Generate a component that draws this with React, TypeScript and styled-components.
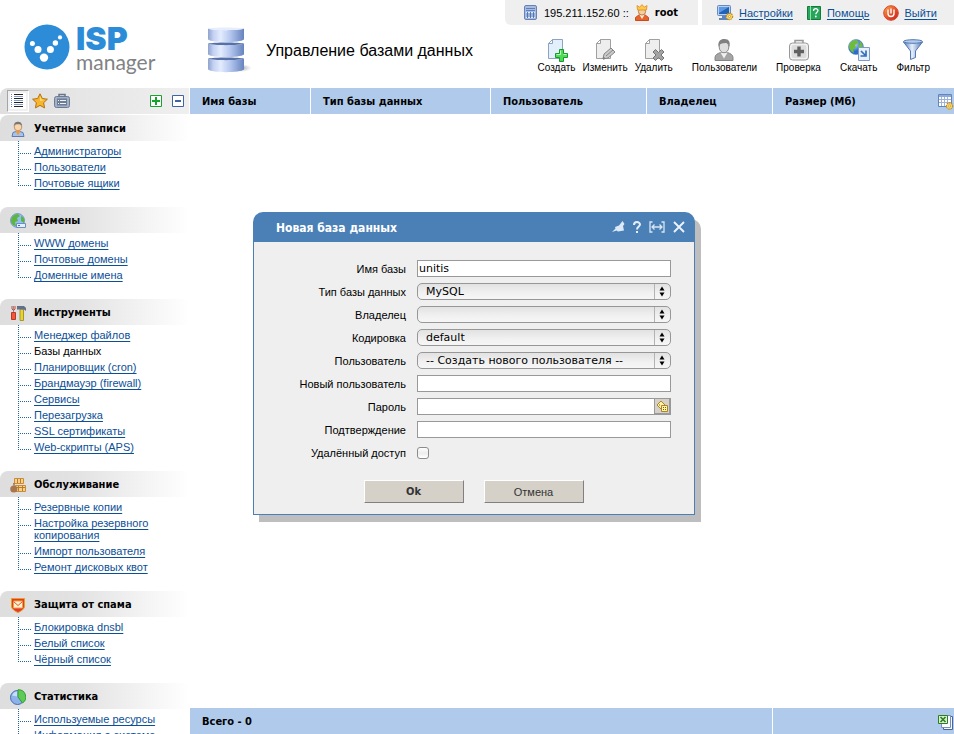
import React from "react";
import styled, { createGlobalStyle, css } from "styled-components";

const regular = `"Liberation Sans", Tahoma, sans-serif`;
const condensed = `"DejaVu Sans Condensed", "DejaVu Sans", Tahoma, sans-serif`;
const wide = `"DejaVu Sans", Verdana, sans-serif`;
const blue = "#afcaeb";
const linkBlue = "#0b4f97";

const GlobalStyle = createGlobalStyle`
  * { box-sizing: border-box; }
  body { margin: 0; background: #fff; color: #000; font: 11px/14px ${regular}; }
  svg { display: block; flex: none; }
`;

const boldText = css`
  font-family: ${condensed};
  font-stretch: condensed;
  font-weight: 700;
`;

const Page = styled.div`
  display: grid;
  grid-template-rows: 88px minmax(0, 1fr);
  height: 100vh;
  overflow: hidden;
  position: relative;
`;

const Link = styled.a`
  color: ${linkBlue};
  text-decoration: underline;
  text-decoration-thickness: 1px;
  text-underline-offset: 2px;
`;

/* ---------- header ---------- */

const Header = styled.header`
  display: flex;
  align-items: flex-start;
`;

const Logo = styled.div`
  display: flex;
  gap: 6px;
  width: 190px;
  padding: 24px 0 0 24px;
`;

const LogoText = styled.div`
  display: flex;
  flex-direction: column;
  padding-top: 2px;
`;

const LogoTop = styled.span`
  color: #2d8cd8;
  font-family: Inter, sans-serif;
  font-size: 32px;
  font-weight: 900;
  line-height: 26px;
`;

const LogoBottom = styled.span`
  color: #808285;
  font-family: Lato, sans-serif;
  font-size: 21px;
  line-height: 20px;
`;

const PageTitle = styled.div`
  display: flex;
  align-items: center;
  gap: 14px;
  padding: 26px 0 0 16px;
`;

const Title = styled.h1`
  margin: 0;
  padding-top: 2px;
  font-size: 16px;
  line-height: 20px;
  font-weight: 400;
  white-space: nowrap;
`;

const HeaderRight = styled.div`
  margin-left: auto;
`;

const TopBar = styled.div`
  display: flex;
  justify-content: flex-end;
  gap: 4px;
`;

const TopPanel = styled.div<{ $rounded?: boolean }>`
  display: flex;
  align-items: center;
  gap: 6px;
  height: 25px;
  padding: 0 20px 0 19px;
  background: #efefef;
  white-space: nowrap;
  ${(p) => p.$rounded && css`border-bottom-left-radius: 6px;`}
`;

const UserName = styled.strong`
  ${boldText}
`;

const TopLinks = styled(TopPanel).attrs({ as: "nav" })`
  gap: 14px;
  padding: 0 17px 0 15px;
`;

const TopItem = styled.span`
  display: flex;
  align-items: center;
  gap: 5px;
`;

const Tools = styled.div`
  display: flex;
  justify-content: flex-end;
  gap: 19px;
  padding: 13px 24px 0 0;
`;

const ToolGroup = styled.div`
  display: flex;
  gap: 7px;
`;

const Tool = styled.button`
  display: flex;
  flex-direction: column;
  align-items: center;
  padding: 0;
  border: 0;
  background: none;
  font: 10px/12px ${regular};
  color: #000;
`;

/* ---------- sidebar ---------- */

const Content = styled.div`
  display: grid;
  grid-template-columns: 190px minmax(0, 1fr);
  min-height: 0;
`;

const Sidebar = styled.aside`
  overflow: hidden;
`;

const SideTools = styled.div`
  display: flex;
  align-items: center;
  gap: 6px;
  height: 26px;
  margin: 0 1px 1px 0;
  padding: 0 5px 0 7px;
  border-top-left-radius: 8px;
  background: linear-gradient(to right, #dfdfdf, #efefef);
`;

const IconButton = styled.button<{ $pressed?: boolean; $push?: boolean }>`
  display: grid;
  place-items: center;
  padding: 0;
  border: 0;
  background: none;
  ${(p) => p.$push && css`margin: 0 4px 0 auto;`}
  ${(p) =>
    p.$pressed &&
    css`
      width: 22px;
      height: 22px;
      margin-right: -3px;
      border: 1px solid #fff;
      border-top-color: #a5a5a5;
      border-left-color: #a5a5a5;
      background: #f0f0f0;
    `}
`;

const SectionTitle = styled.h2`
  display: flex;
  align-items: center;
  gap: 8px;
  height: 26px;
  margin: 0;
  padding: 2px 0 0 10px;
  border-top-left-radius: 8px;
  background: linear-gradient(to right, #dedede, #e2e2e2 40%, #fff);
  font-size: 11px;
  ${boldText}
`;

const dotsDown = `repeating-linear-gradient(to bottom, #1d66a3 0 1px, transparent 1px 2px)`;
const dotsRight = `repeating-linear-gradient(to right, #1d66a3 0 1px, transparent 1px 2px)`;

const Tree = styled.ul`
  margin: 0 0 16px 18px;
  padding: 2px 0 0;
  list-style: none;
  background: ${dotsDown} 0 0 / 1px 2px no-repeat;
`;

const TreeItem = styled.li`
  padding: 2px 24px 2px 16px;
  line-height: 12px;
  background: ${dotsDown} 0 0 / 1px 100% no-repeat, ${dotsRight} 0 10px / 13px 1px no-repeat;
  &:last-child {
    background-size: 1px 11px, 13px 1px;
  }
`;

/* ---------- table ---------- */

const Grid = styled.table`
  width: 100%;
  height: 100%;
  border-collapse: separate;
  border-spacing: 0;
  table-layout: fixed;
`;

const Column = styled.col<{ $width?: number }>`
  ${(p) => p.$width && css`width: ${p.$width}px;`}
`;

const cell = css`
  height: 26px;
  padding: 2px 0 0 12px;
  background: ${blue};
  border-right: 1px solid #fff;
  text-align: left;
  white-space: nowrap;
  ${boldText}
  &:last-child { border-right: 0; }
`;
const HeadCell = styled.th`${cell}`;
const FootCell = styled.td`${cell}`;
const CellRow = styled.div`
  display: flex;
  align-items: center;
  justify-content: space-between;
`;
const CellEnd = styled(CellRow)`
  justify-content: flex-end;
`;

/* ---------- dialog ---------- */

const Overlay = styled.div`
  position: absolute;
  inset: 0;
  display: flex;
  justify-content: center;
  align-items: flex-start;
  padding: 212px 6px 0 0;
`;

const Dialog = styled.section`
  width: 442px;
  border-radius: 10px 10px 0 0;
  background: #4b80b7;
  box-shadow: 6px 7px 0 #bebebe;
`;

const DialogBar = styled.div`
  display: flex;
  align-items: center;
  gap: 8px;
  height: 30px;
  padding: 0 10px 0 23px;
  color: #fff;
`;

const DialogTitle = styled.h2`
  flex: 1;
  margin: 0;
  padding-top: 2px;
  font-size: 12px;
  ${boldText}
`;

const Form = styled.form`
  margin: 0 1px;
  padding: 15px 23px 11px 0;
  border-bottom: 1px solid #4b80b7;
  background: #efefef;
`;

const Row = styled.div`
  display: grid;
  grid-template-columns: 152px minmax(0, 1fr);
  align-items: center;
  column-gap: 11px;
  height: 23px;
`;

const Label = styled.label`
  text-align: right;
`;

const Input = styled.input`
  width: 100%;
  min-width: 0;
  height: 17px;
  padding: 0 1px;
  border: 1px solid #999;
  border-radius: 0;
  background: #fff;
  font: 11px/15px ${wide};
`;

const InputGroup = styled.div`
  display: flex;
  ${Input} { border-right: 0; }
`;

const DiceButton = styled.button`
  display: grid;
  place-items: center;
  flex: none;
  width: 17px;
  height: 17px;
  padding: 0;
  border: 1px solid #999;
  border-right-width: 2px;
  border-bottom-width: 2px;
  background: #d6d0c8;
`;

const SelectBox = styled.div`
  display: grid;
  grid-template-columns: minmax(0, 1fr) 17px;
  align-items: center;
  svg { grid-area: 1 / 2; pointer-events: none; }
`;

const Select = styled.select`
  grid-area: 1 / 1 / 2 / 3;
  width: 100%;
  height: 17px;
  padding: 0 20px 0 8px;
  appearance: none;
  border: 1px solid #979797;
  border-radius: 5px;
  background: linear-gradient(to bottom, #e2e2e2, #f1f1f1 60%, #f6f6f6);
  color: #000;
  font: 11px/15px ${wide};
`;

const Checkbox = styled.input.attrs({ type: "checkbox" })`
  width: 12px;
  height: 12px;
  margin: 0;
  appearance: none;
  border: 1px solid #8c8c8c;
  border-radius: 3px;
  background: linear-gradient(to bottom, #fff, #ececec 50%, #fff);
`;

const Buttons = styled.div`
  display: flex;
  justify-content: center;
  gap: 20px;
  padding: 16px 0 0 22px;
`;

const Button = styled.button<{ $primary?: boolean }>`
  width: 100px;
  height: 23px;
  padding: 0;
  border: 1px solid #fff;
  border-right-color: #808080;
  border-bottom-color: #808080;
  background: #d5d1c9;
  color: #333;
  font: 11px/14px ${regular};
  ${(p) => p.$primary && boldText}
`;

/* ---------- drawings ---------- */

const LogoMark = () => (
  <svg width="46" height="46" viewBox="0 0 46 46">
    <circle cx="23" cy="23" r="22.5" fill="#2d8cd8" />
    <g fill="#fff">
      <circle cx="8.4" cy="19.6" r="2.5" /><circle cx="14" cy="25.6" r="3.5" /><circle cx="20" cy="33.6" r="4.2" />
      <circle cx="26.4" cy="25.6" r="3.5" /><circle cx="31.4" cy="19" r="2.7" /><circle cx="36" cy="13.4" r="2.1" />
    </g>
  </svg>
);

const DatabaseIcon = () => (
  <svg width="46" height="48" viewBox="0 0 46 48">
    <defs>
      <linearGradient id="db" x1="0" x2="1"><stop offset="0" stopColor="#8fa3d0" /><stop offset=".15" stopColor="#c3d1f2" /><stop offset=".35" stopColor="#e3ebfd" /><stop offset=".6" stopColor="#b9caf0" /><stop offset="1" stopColor="#6683bf" /></linearGradient>
      <radialGradient id="dbs"><stop offset="0" stopColor="#6f7480" stopOpacity=".8" /><stop offset="1" stopColor="#aaa" stopOpacity="0" /></radialGradient>
    </defs>
    <ellipse cx="34" cy="42" rx="12" ry="4" fill="url(#dbs)" />
    {[31, 16, 1].map((y) => (
      <g key={y} transform={`translate(2 ${y})`}>
        <path d="M0 1.500v11c4 3.500 32 3.500 36 0v-11c-5 2.200-31 2.200-36 0z" fill="url(#db)" />
        <path d="M0 1.500c5-1.500 31-1.500 36 0-5 2.200-31 2.200-36 0z" fill={y > 1 ? "#5671a8" : "#e6edfc"} />
      </g>
    ))}
  </svg>
);

const ServerIcon = () => (
  <svg width="14" height="16" viewBox="0 0 14 16">
    <rect x=".5" y=".5" width="12" height="14" rx="1.5" fill="#a9bce0" stroke="#6683b8" />
    <path d="M2 3.5h9M2 5.5h9" stroke="#5e7ebc" />
    <path d="M2 7h9v6H2z" fill="#e2ebfa" /><path d="M3.5 7v6M6.5 7v6M9.5 7v6M2 9h9M2 11h9" stroke="#5376b8" />
  </svg>
);

const CrownIcon = () => (
  <svg width="14" height="17" viewBox="0 0 14 17">
    <path d="M.5 16.5v-3l4-3h5l4 3v3z" fill="#e7642c" stroke="#c94c17" />
    <path d="M4 10l3 5 3-5z" fill="#fff0dc" />
    <circle cx="7" cy="7.5" r="3.6" fill="#f6cf9b" stroke="#a96631" strokeWidth=".8" />
    <path d="M2.500 6L2 1.500l2.600 1.700L7 .6l2.400 2.600L12 1.500 11.500 6z" fill="#ffc94d" stroke="#dd8a1b" strokeWidth=".8" />
  </svg>
);

const GearDot = ({ x, y, r = 2.6 }: { x: number; y: number; r?: number }) => (
  <g>
    <circle cx={x} cy={y} r={r} fill="#f8d257" stroke="#c08a19" strokeWidth="1.4" strokeDasharray="1.5 .7" />
    <circle cx={x} cy={y} r={r - 0.4} fill="#f8d257" /><circle cx={x} cy={y} r="1" fill="#fff" stroke="#a87713" strokeWidth=".5" />
  </g>
);

const MonitorIcon = () => (
  <svg width="17" height="16" viewBox="0 0 17 16">
    <rect x=".5" y=".5" width="13" height="10" rx="1" fill="#b9cff0" stroke="#6a89bd" />
    <path d="M2 2h10v7H2z" fill="#1f62b8" /><path d="M2 2h10L2 8z" fill="#5b9be3" />
    <path d="M5 11h4v2h3v2H2v-2h3z" fill="#5f83bb" /><GearDot x={12.5} y={11.5} r={3} />
  </svg>
);

const HelpIcon = () => (
  <svg width="15" height="16" viewBox="0 0 15 16">
    <path d="M.5 1.500h13v13H.5z" fill="#27a55a" stroke="#14793a" /><path d="M3.500 1v14" stroke="#8be0ad" />
    <path d="M6.500 6c0-3 4.500-3 4.500-.4 0 1.600-2.200 1.700-2.200 3.600" fill="none" stroke="#fff" strokeWidth="1.3" /><circle cx="8.800" cy="11.500" r=".9" fill="#fff" />
  </svg>
);

const PowerIcon = () => (
  <svg width="16" height="16" viewBox="0 0 16 16">
    <defs><linearGradient id="pw" x1="0" y1="0" x2="1" y2="1"><stop offset="0" stopColor="#f8b04a" /><stop offset=".5" stopColor="#e8542b" /><stop offset="1" stopColor="#c5201b" /></linearGradient></defs>
    <circle cx="8" cy="8" r="7.300" fill="url(#pw)" stroke="#d8472a" />
    <path d="M5 4.500v4a3 3 0 0 0 6 0v-4M8 3.500v5" fill="none" stroke="#fff" strokeWidth="1.400" />
  </svg>
);

const Doc = ({ tint, line }: { tint: string; line: string }) => (
  <>
    <path d="M7.500 1.500h10v19h-14v-15z" fill={tint} stroke={line} />
    <path d="M7.500 1.500v4h-4z" fill="#fff" stroke={line} />
  </>
);

const CreateIcon = () => (
  <svg width="24" height="24" viewBox="0 0 24 24">
    <Doc tint="#e4effc" line="#8ba3c4" />
    <path d="M14.500 11.500h4v4h4v4h-4v4h-4v-4h-4v-4h4z" fill="#4fdc55" stroke="#179a2d" />
    <path d="M15.500 12.500v4h-4M18.500 16.500h3" stroke="#c0ffc0" fill="none" />
  </svg>
);
const EditIcon = () => (
  <svg width="24" height="24" viewBox="0 0 24 24">
    <Doc tint="#eeeeee" line="#a0a0a0" />
    <path d="M10 21l1-5 7-6 4 4-7 6z" fill="#c9c9c9" stroke="#858585" /><path d="M13 18l7-6M10 21l2-.5-1.500-1.500z" stroke="#858585" fill="#555" />
  </svg>
);
const DeleteIcon = () => (
  <svg width="24" height="24" viewBox="0 0 24 24">
    <Doc tint="#eeeeee" line="#a0a0a0" />
    <path d="M11 14l2.500-2.500 3 3 3-3L22 14l-3 3 3 3-2.500 2.500-3-3-3 3L11 20l3-3z" fill="#a3a3a3" stroke="#747474" />
  </svg>
);
const UsersIcon = () => (
  <svg width="24" height="24" viewBox="0 0 24 24">
    <path d="M3 22.500v-3c0-3 3-4 5.500-5h7c2.500 1 5.500 2 5.500 5v3z" fill="#a5a5a5" stroke="#858585" />
    <path d="M8.500 14.500l3.500 6 3.500-6z" fill="#f2f2f2" />
    <ellipse cx="12" cy="9" rx="4.800" ry="5.800" fill="#dedede" stroke="#8a8a8a" />
    <path d="M6.500 9C5.500 3 9 .8 12.500 1 17 1 18.500 4 17.500 9c-1-3-2-4.500-4.500-4-2.500.5-5.500 0-6.500 4z" fill="#808080" />
  </svg>
);
const CheckIcon = () => (
  <svg width="24" height="24" viewBox="0 0 24 24">
    <path d="M8 5V2.500h8V5" fill="none" stroke="#999" strokeWidth="1.500" />
    <rect x="2.500" y="5" width="19" height="17" rx="3" fill="#f2f2f2" stroke="#999" />
    <rect x="4.500" y="7" width="15" height="13" rx="2" fill="#dcdcdc" />
    <path d="M10.300 8.500h3.400v3.300H17v3.400h-3.300v3.300h-3.400v-3.300H7v-3.400h3.300z" fill="#606060" />
  </svg>
);
const DownloadIcon = () => (
  <svg width="24" height="24" viewBox="0 0 24 24">
    <defs><radialGradient id="globe" cx=".35" cy=".3"><stop offset="0" stopColor="#d4eaff" /><stop offset="1" stopColor="#2b6cc7" /></radialGradient></defs>
    <circle cx="9" cy="9" r="7.500" fill="url(#globe)" stroke="#4d83c3" strokeWidth=".6" />
    <path d="M2 8c1-4 4-6 8-6l1 3-3 2 1 3-3 1 1 4c-3-1-5-4-5-7zM12 3c3 1 4 4 4 7l-3 1-2-3 2-2z" fill="#6fbc38" />
    <path d="M11.500 9.500h11v13h-11z" fill="#e6effc" stroke="#7c9bc9" />
    <path d="M14 13l4 4m1-4.500V18h-5.500" stroke="#326cba" strokeWidth="1.700" fill="none" />
  </svg>
);
const FilterIcon = () => (
  <svg width="24" height="24" viewBox="0 0 24 24">
    <defs><linearGradient id="fn" x1="0" x2="1"><stop offset="0" stopColor="#4f76b5" /><stop offset=".45" stopColor="#e6f0fc" /><stop offset="1" stopColor="#5377b3" /></linearGradient></defs>
    <path d="M2.500 4l7 9v8.500l5-2V13l7-9z" fill="url(#fn)" stroke="#5378b4" /><ellipse cx="12" cy="3.500" rx="9.500" ry="1.800" fill="#b3caec" stroke="#5378b4" />
  </svg>
);

const ListIcon = () => (
  <svg width="16" height="16" viewBox="0 0 16 16">
    <path d="M0 0h16v16H0z" fill="#fff" /><path d="M4 1.500h9M4 5.500h9M4 9.500h9M4 13.500h9" stroke="#222" />
    <path d="M4 3.500h9M4 7.500h9M4 11.500h9" stroke="#809ccc" /><path d="M1.500 1v14" stroke="#6283bd" strokeDasharray="1 1" />
  </svg>
);
const StarIcon = () => (
  <svg width="16" height="16" viewBox="0 0 16 16">
    <path d="M8 .8l2.300 4.700 5.100.7-3.800 3.500 1 5.200L8 12.400l-4.600 2.500 1-5.200L.6 6.200l5.100-.7z" fill="#f8b62e" stroke="#b66f10" /><path d="M8 3l1.500 3.500 3 .4L8 8z" fill="#ffe27c" />
  </svg>
);
const CaseIcon = () => (
  <svg width="16" height="16" viewBox="0 0 16 16">
    <path d="M5 4V1.500h6V4" fill="none" stroke="#65758d" strokeWidth="1.500" /><rect x=".5" y="3.500" width="15" height="11" rx="2" fill="#a3b1c7" stroke="#6b7b93" />
    <path d="M3 5.500h10v7H3z" fill="#6d7d96" /><path d="M4 7.500h1m1 0h6M4 10.500h1m1 0h6" stroke="#eef3fa" />
  </svg>
);
const SquareIcon = ({ color, plus }: { color: string; plus?: boolean }) => (
  <svg width="12" height="12" viewBox="0 0 12 12">
    <path d="M.5.5h11v11H.5z" fill="#fff" stroke={color} /><path d={plus ? "M2 6h8M6 2v8" : "M3 6h6"} stroke={color} strokeWidth="2" />
  </svg>
);

const sectionIcons: Record<string, React.ReactNode> = {
  user: (
    <>
      <path d="M2 15.500l1-4 3-1h4l3 1 1 4z" fill="#a9c2ea" stroke="#5a7db6" /><path d="M5.500 10l2.500 4.500 2.500-4.500z" fill="#ef9a3d" />
      <circle cx="8" cy="6" r="3.800" fill="#f9d6ad" stroke="#b28356" strokeWidth=".8" /><path d="M3.800 5C4 1.500 6 .7 8 .7S12 1.500 12.200 5C11 3 10 3.200 8 3.200S5 3 3.800 5z" fill="#777" />
    </>
  ),
  globe: (
    <>
      <circle cx="7.500" cy="7.500" r="7" fill="#8fc0f2" stroke="#5386c4" strokeWidth=".7" /><path d="M1 8c0-4 3-7 7-7l2 2-3 2 1 3-3 1 1 4c-3 0-5-3-5-5zM11 3c3 1 4 4 3 7l-3-2z" fill="#5fb53f" />
      <path d="M6.500 10.500h9v4h-9z" fill="#e5effc" stroke="#6b8fc4" /><path d="M8 12.500h2" stroke="#3c70b8" />
    </>
  ),
  tools: (
    <>
      <path d="M3.500 1v7" stroke="#8193b3" /><path d="M1.500 7.500h4v7h-4z" fill="#ef5a3c" stroke="#bd3820" /><path d="M2 1v3l1.500 1.500L5 4V1" fill="none" stroke="#d9432b" />
      <path d="M10 4h3.500v11.500H10z" fill="#e9d334" stroke="#a4982a" /><path d="M7 1h7l2 2v3l-2-1.500H7z" fill="#627189" />
    </>
  ),
  box: (
    <>
      <path d="M4.500 1.500h9v5h-9zM5.500 8.500h10v6h-10z" fill="#f5cf8d" stroke="#c88d36" /><path d="M7.500 2v4M10.500 2v4M8.500 9v5M12.500 9v5M6 10.500h9" stroke="#bb7b2a" />
      <ellipse cx="3.800" cy="12" rx="3.600" ry="3.600" fill="#a9764e" /><path d="M3 6h2l-.5 3h-1z" fill="#a9764e" />
    </>
  ),
  shield: (
    <>
      <path d="M1.500 1.500h13V9c0 3-3 5-6.500 6.500C4.500 14 1.500 12 1.500 9z" fill="#e5392f" stroke="#e8a11c" /><path d="M3.500 4h9v7h-9z" fill="#fff1cf" stroke="#e8a43f" /><path d="M3.500 4.500L8 8.500l4.500-4" fill="none" stroke="#d9582b" />
    </>
  ),
  pie: (
    <>
      <circle cx="7.500" cy="8.500" r="7" fill="#8db1ea" stroke="#416db2" /><path d="M8 8V.8A7.200 7.200 0 0 1 12.500 14z" fill="#5fcb55" stroke="#2f9b37" /><path d="M2 6.500c1-2.500 3-4 5-4v5z" fill="#c7dbfa" />
    </>
  ),
};

const SectionIcon = ({ name }: { name: string }) => (
  <svg width="16" height="16" viewBox="0 0 16 16">{sectionIcons[name]}</svg>
);

const ColumnsIcon = () => (
  <svg width="16" height="16" viewBox="0 0 16 16">
    <path d="M.5.5h13v12H.5z" fill="#fff" stroke="#6684b9" /><path d="M1 1h12v2H1z" fill="#8daadb" /><path d="M3.500 3v9M6.500 3v9M9.500 3v9M1 5.500h12M1 8.500h12" stroke="#9eb3d8" /><GearDot x={11.5} y={12} r={3} />
  </svg>
);
const ExcelIcon = () => (
  <svg width="16" height="17" viewBox="0 0 16 17">
    <path d="M5.500 2.500h9v13h-9z" fill="#f3f8ff" stroke="#46669b" /><path d="M3.500 1.500h9v12h-9z" fill="#fff" stroke="#7590bd" />
    <path d="M.5 1.500h9v8h-9z" fill="#d8f2cf" stroke="#2e7d23" /><path d="M2.500 3l5 5m0-5l-5 5" stroke="#2e7d23" strokeWidth="1.600" />
  </svg>
);

const PinIcon = () => (
  <svg width="13" height="12" viewBox="0 0 13 12"><path d="M0 11l3.500-3.500L3 6l4-1.500L10.500 0 12.500 3l-1.500 2 1 4.500-6 1L4.500 9.500z" fill="#dce9f7" /></svg>
);
const QuestionIcon = () => (
  <svg width="8" height="13" viewBox="1 0 8 13"><path d="M2 4c0-4 6-3.600 6-.5C8 5.500 5 5.500 5 8.500" fill="none" stroke="#e5eef8" strokeWidth="2" /><path d="M4 10h2v2H4z" fill="#e5eef8" /></svg>
);
const StretchIcon = () => (
  <svg width="16" height="12" viewBox="0 0 16 12"><path d="M3.500 1H1v10h2.500M12.500 1H15v10h-2.500M3 6h10M5.500 3.500L3 6l2.500 2.500M10.500 3.500L13 6l-2.500 2.500" fill="none" stroke="#d8e6f5" strokeWidth="1.300" /></svg>
);
const CloseIcon = () => (
  <svg width="12" height="12" viewBox="0 0 12 12"><path d="M1 1l10 10M11 1L1 11" stroke="#eef4fb" strokeWidth="1.800" /></svg>
);
const ArrowsIcon = () => (
  <svg width="17" height="15" viewBox="0 0 17 15"><path d="M.5 0v15" stroke="#b3b3b3" /><path d="M8 2.500l2.500 4h-5zM8 12.500l2.500-4h-5z" fill="#000" /></svg>
);
const DiceIcon = () => (
  <svg width="13" height="13" viewBox="0 0 13 13">
    <path d="M5 1l4 4-4 4-4-4z" fill="#fff3a0" stroke="#a8842f" /><path d="M5.500 5.500h6v6h-6z" fill="#fff3a0" stroke="#a8842f" /><path d="M7 7.500h1m1 0h1M7 9.500h1m1 0h1M3 5h1" stroke="#7d5f1e" />
  </svg>
);

/* ---------- data ---------- */

const sections = [
  { icon: "user", title: "Учетные записи", items: ["Администраторы", "Пользователи", "Почтовые ящики"] },
  { icon: "globe", title: "Домены", items: ["WWW домены", "Почтовые домены", "Доменные имена"] },
  {
    icon: "tools",
    title: "Инструменты",
    items: ["Менеджер файлов", "Базы данных", "Планировщик (cron)", "Брандмауэр (firewall)", "Сервисы", "Перезагрузка", "SSL сертификаты", "Web-скрипты (APS)"],
  },
  { icon: "box", title: "Обслуживание", items: ["Резервные копии", "Настройка резервного копирования", "Импорт пользователя", "Ремонт дисковых квот"] },
  { icon: "shield", title: "Защита от спама", items: ["Блокировка dnsbl", "Белый список", "Чёрный список"] },
  { icon: "pie", title: "Статистика", items: ["Используемые ресурсы", "Информация о системе"] },
];
const currentItem = "Базы данных";

const toolGroups = [
  [
    { label: "Создать", icon: <CreateIcon /> },
    { label: "Изменить", icon: <EditIcon /> },
    { label: "Удалить", icon: <DeleteIcon /> },
  ],
  [{ label: "Пользователи", icon: <UsersIcon /> }],
  [{ label: "Проверка", icon: <CheckIcon /> }],
  [{ label: "Скачать", icon: <DownloadIcon /> }],
  [{ label: "Фильтр", icon: <FilterIcon /> }],
];

const selects = [
  { id: "type", label: "Тип базы данных", value: "MySQL" },
  { id: "owner", label: "Владелец", value: "" },
  { id: "charset", label: "Кодировка", value: "default" },
  { id: "user", label: "Пользователь", value: "-- Создать нового пользователя --" },
];

export default function App() {
  return (
    <>
      <GlobalStyle />
      <Page>
        <Header>
          <Logo>
            <LogoMark />
            <LogoText>
              <LogoTop>ISP</LogoTop>
              <LogoBottom>manager</LogoBottom>
            </LogoText>
          </Logo>
          <PageTitle>
            <DatabaseIcon />
            <Title>Управление базами данных</Title>
          </PageTitle>
          <HeaderRight>
            <TopBar>
              <TopPanel $rounded>
                <ServerIcon />
                <span>195.211.152.60 ::</span>
                <CrownIcon />
                <UserName>root</UserName>
              </TopPanel>
              <TopLinks>
                <TopItem><MonitorIcon /><Link href="#settings">Настройки</Link></TopItem>
                <TopItem><HelpIcon /><Link href="#help">Помощь</Link></TopItem>
                <TopItem><PowerIcon /><Link href="#logout">Выйти</Link></TopItem>
              </TopLinks>
            </TopBar>
            <Tools>
              {toolGroups.map((group) => (
                <ToolGroup key={group[0].label}>
                  {group.map((t) => (
                    <Tool key={t.label} type="button">{t.icon}{t.label}</Tool>
                  ))}
                </ToolGroup>
              ))}
            </Tools>
          </HeaderRight>
        </Header>

        <Content>
          <Sidebar>
            <SideTools>
              <IconButton type="button" aria-label="Меню" $pressed><ListIcon /></IconButton>
              <IconButton type="button" aria-label="Избранное"><StarIcon /></IconButton>
              <IconButton type="button" aria-label="Задачи"><CaseIcon /></IconButton>
              <IconButton type="button" aria-label="Развернуть" $push><SquareIcon color="#14a52a" plus /></IconButton>
              <IconButton type="button" aria-label="Свернуть"><SquareIcon color="#3e64a4" /></IconButton>
            </SideTools>
            <nav>
              {sections.map((s) => (
                <section key={s.title}>
                  <SectionTitle><SectionIcon name={s.icon} />{s.title}</SectionTitle>
                  <Tree>
                    {s.items.map((item) => (
                      <TreeItem key={item}>
                        {item === currentItem ? item : <Link href="#">{item}</Link>}
                      </TreeItem>
                    ))}
                  </Tree>
                </section>
              ))}
            </nav>
          </Sidebar>

          <Grid>
            <colgroup>
              <Column $width={121} /><Column $width={180} /><Column $width={156} /><Column $width={126} /><Column />
            </colgroup>
            <thead>
              <tr>
                <HeadCell>Имя базы</HeadCell>
                <HeadCell>Тип базы данных</HeadCell>
                <HeadCell>Пользователь</HeadCell>
                <HeadCell>Владелец</HeadCell>
                <HeadCell><CellRow>Размер (Мб)<ColumnsIcon /></CellRow></HeadCell>
              </tr>
            </thead>
            <tbody><tr><td colSpan={5} /></tr></tbody>
            <tfoot>
              <tr>
                <FootCell colSpan={4}>Всего - 0</FootCell>
                <FootCell><CellEnd><ExcelIcon /></CellEnd></FootCell>
              </tr>
            </tfoot>
          </Grid>
        </Content>

        <Overlay>
          <Dialog role="dialog" aria-labelledby="dialog-title">
            <DialogBar>
              <DialogTitle id="dialog-title">Новая база данных</DialogTitle>
              <IconButton type="button" aria-label="Закрепить"><PinIcon /></IconButton>
              <IconButton type="button" aria-label="Справка"><QuestionIcon /></IconButton>
              <IconButton type="button" aria-label="Растянуть"><StretchIcon /></IconButton>
              <IconButton type="button" aria-label="Закрыть"><CloseIcon /></IconButton>
            </DialogBar>
            <Form onSubmit={(e) => e.preventDefault()}>
              <Row>
                <Label htmlFor="name">Имя базы</Label>
                <Input id="name" type="text" defaultValue="unitis" />
              </Row>
              {selects.map((s) => (
                <Row key={s.id}>
                  <Label htmlFor={s.id}>{s.label}</Label>
                  <SelectBox>
                    <Select id={s.id}><option>{s.value}</option></Select>
                    <ArrowsIcon />
                  </SelectBox>
                </Row>
              ))}
              <Row>
                <Label htmlFor="newuser">Новый пользователь</Label>
                <Input id="newuser" type="text" />
              </Row>
              <Row>
                <Label htmlFor="password">Пароль</Label>
                <InputGroup>
                  <Input id="password" type="password" />
                  <DiceButton type="button" aria-label="Случайный пароль"><DiceIcon /></DiceButton>
                </InputGroup>
              </Row>
              <Row>
                <Label htmlFor="confirm">Подтверждение</Label>
                <Input id="confirm" type="password" />
              </Row>
              <Row>
                <Label htmlFor="remote">Удалённый доступ</Label>
                <Checkbox id="remote" />
              </Row>
              <Buttons>
                <Button type="submit" $primary>Ok</Button>
                <Button type="button">Отмена</Button>
              </Buttons>
            </Form>
          </Dialog>
        </Overlay>
      </Page>
    </>
  );
}
